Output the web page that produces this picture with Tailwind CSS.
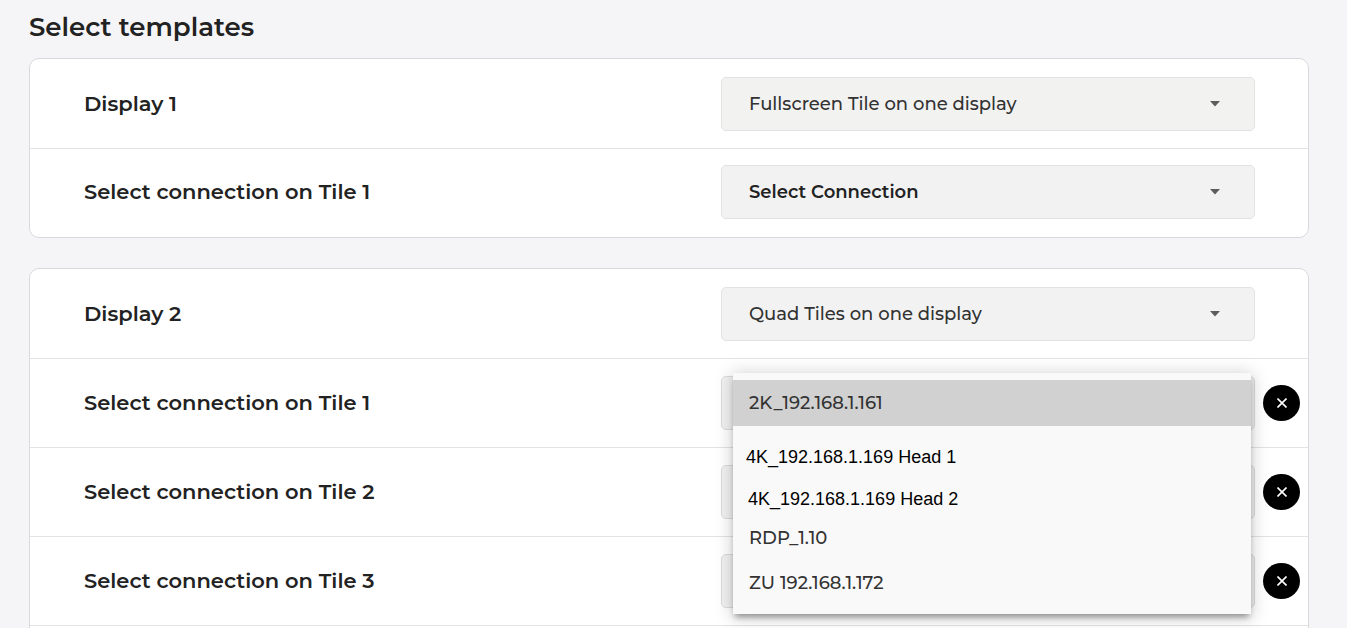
<!DOCTYPE html>
<html lang="en">
<head>
<meta charset="utf-8">
<title>Select templates</title>
<script src="https://cdn.jsdelivr.net/npm/@tailwindcss/browser@4"></script>
</head>
<body class="h-screen overflow-hidden bg-[#f5f5f7] pr-[38px] pl-[29px] font-['Montserrat','Inter',sans-serif] text-[#222]">
<svg class="hidden">
  <symbol id="caret" viewBox="0 0 10 6"><path d="M0 0h10L5 5.500z" fill="currentColor"/></symbol>
  <symbol id="cross" viewBox="0 0 10 10"><path d="M0.500 0.500l9 9M9.500 0.500L0.500 9.500" stroke="currentColor" stroke-width="1.600" fill="none"/></symbol>
</svg>
<main class="h-full overflow-hidden">
  <h1 class="pt-[7px] pb-[11px] text-[26px] leading-10 font-semibold">Select templates</h1>

  <section class="rounded-[10px] border border-[#d9d9db] bg-white">
    <div class="flex items-center justify-between border-b border-[#e3e3e4] pt-[18px] pr-[53px] pb-[17px] pl-[54px]">
      <label for="d1" class="text-[21px] leading-8 font-semibold">Display 1</label>
      <div class="relative w-[534px]">
        <select id="d1" class="block h-[54px] w-full appearance-none rounded-[5px] border border-[#e2e2e2] bg-[#f2f2f1] pr-12 pl-[27px] text-[18px] font-medium text-[#333]"><option>Fullscreen Tile on one display</option></select>
        <svg class="pointer-events-none absolute top-6 right-[35px] h-[6px] w-[10px] text-[#5c5c5c]"><use href="#caret"/></svg>
      </div>
    </div>
    <div class="flex items-center justify-between pt-4 pr-[53px] pb-[18px] pl-[54px]">
      <label for="d1t1" class="text-[21px] leading-8 font-semibold">Select connection on Tile 1</label>
      <div class="relative w-[534px]">
        <select id="d1t1" class="block h-[54px] w-full appearance-none rounded-[5px] border border-[#e2e2e2] bg-[#f2f2f2] pr-12 pl-[27px] text-[18px] font-semibold"><option>Select Connection</option></select>
        <svg class="pointer-events-none absolute top-6 right-[35px] h-[6px] w-[10px] text-[#5c5c5c]"><use href="#caret"/></svg>
      </div>
    </div>
  </section>

  <section class="mt-[30px] rounded-[10px] border border-[#d9d9db] bg-white pb-24">
    <div class="flex items-center justify-between border-b border-[#e3e3e4] pt-[18px] pr-[53px] pb-[17px] pl-[54px]">
      <label for="d2" class="text-[21px] leading-8 font-semibold">Display 2</label>
      <div class="relative w-[534px]">
        <select id="d2" class="block h-[54px] w-full appearance-none rounded-[5px] border border-[#e2e2e2] bg-[#f2f2f2] pr-12 pl-[27px] text-[18px] font-medium text-[#333]"><option>Quad Tiles on one display</option></select>
        <svg class="pointer-events-none absolute top-6 right-[35px] h-[6px] w-[10px] text-[#5c5c5c]"><use href="#caret"/></svg>
      </div>
    </div>
    <div class="flex items-center border-b border-[#e3e3e4] py-[17px] pr-2 pl-[54px]">
      <label for="d2t1" class="flex-1 text-[21px] leading-8 font-semibold">Select connection on Tile 1</label>
      <div class="relative w-[534px]">
        <select id="d2t1" class="block h-[54px] w-full appearance-none rounded-[5px] border border-[#dcdcdc] bg-[#f2f2f2]"></select>
        <ul role="listbox" aria-label="Connections" class="absolute -top-[3px] right-1 left-3 z-10 bg-[#f9f9f9] pt-[7px] pb-1 text-[18px] font-medium text-[#333] shadow-[0_5px_6px_-2px_rgba(0,0,0,0.35),0_2px_16px_2px_rgba(0,0,0,0.18)]">
          <li role="option" aria-selected="true" class="flex h-[46px] items-center bg-[#d1d1d1] px-4">2K_192.168.1.161</li>
          <li role="option" class="mt-[10px] flex h-[42px] items-center px-[13px] font-['Liberation_Sans',sans-serif] font-normal text-black">4K_192.168.1.169 Head 1</li>
          <li role="option" class="flex h-[42px] items-center px-[15px] font-['Liberation_Sans',sans-serif] font-normal text-black">4K_192.168.1.169 Head 2</li>
          <li role="option" class="flex h-9 items-center px-4">RDP_1.10</li>
          <li role="option" class="flex h-[54px] items-center px-4">ZU 192.168.1.172</li>
        </ul>
      </div>
      <button aria-label="Clear tile 1" class="ml-2 flex h-9 w-[37px] items-center justify-center rounded-[50%] bg-black text-white"><svg class="size-[10px]"><use href="#cross"/></svg></button>
    </div>
    <div class="flex items-center border-b border-[#e3e3e4] py-[17px] pr-2 pl-[54px]">
      <label for="d2t2" class="flex-1 text-[21px] leading-8 font-semibold">Select connection on Tile 2</label>
      <select id="d2t2" class="block h-[54px] w-[534px] appearance-none rounded-[5px] border border-[#dcdcdc] bg-[#f2f2f2]"></select>
      <button aria-label="Clear tile 2" class="ml-2 flex h-9 w-[37px] items-center justify-center rounded-[50%] bg-black text-white"><svg class="size-[10px]"><use href="#cross"/></svg></button>
    </div>
    <div class="flex items-center border-b border-[#e3e3e4] py-[17px] pr-2 pl-[54px]">
      <label for="d2t3" class="flex-1 text-[21px] leading-8 font-semibold">Select connection on Tile 3</label>
      <select id="d2t3" class="block h-[54px] w-[534px] appearance-none rounded-[5px] border border-[#dcdcdc] bg-[#f2f2f2]"></select>
      <button aria-label="Clear tile 3" class="ml-2 flex h-9 w-[37px] items-center justify-center rounded-[50%] bg-black text-white"><svg class="size-[10px]"><use href="#cross"/></svg></button>
    </div>
  </section>
</main>
</body>
</html>
